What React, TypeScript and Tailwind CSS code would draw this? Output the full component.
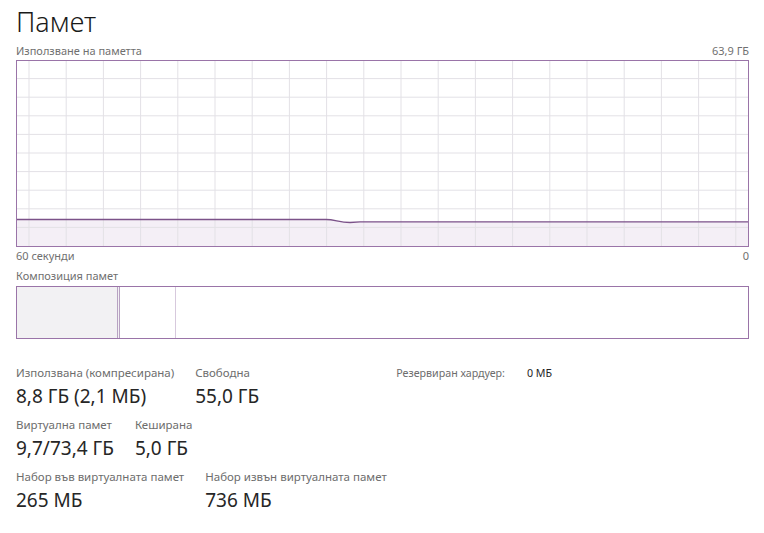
import type { ReactNode } from 'react'

const FONT = { fontFamily: '"Noto Sans", "Open Sans", sans-serif' }

const W = 731
const H = 185
const COLS = Array.from({ length: 20 }, (_, i) => 12 + i * 37.2).filter((x) => x < W)
const ROWS = Array.from({ length: 9 }, (_, i) => 17.6 + i * 18.6)

const usage = `M0 158.5 L309 158.5 C318 158.5 322 161.5 333 161.5 L343 160.8 L${W} 160.8`

function UsageChart() {
  return (
    <div className="h-[187px] w-[733px] border border-[#9a74a8]">
      <svg width={W} height={H} className="block">
        <path d={`${usage} L${W} ${H} L0 ${H} Z`} fill="#f4eff6" />
        {COLS.map((x) => (
          <line key={x} x1={x} x2={x} y1={0} y2={H} stroke="#e3e1e6" strokeWidth={1} />
        ))}
        {ROWS.map((y) => (
          <line key={y} x1={0} x2={W} y1={y} y2={y} stroke="#e3e1e6" strokeWidth={1} />
        ))}
        <path d={usage} fill="none" stroke="#7b5289" strokeWidth={1.3} />
      </svg>
    </div>
  )
}

function Stat({ label, value }: { label: string; value: ReactNode }) {
  return (
    <div className="flex flex-col">
      <span className="text-[11.5px] leading-[16px] text-[#6d6d6d]">{label}</span>
      <span className="mt-[3px] text-[19px] leading-[24px] text-[#262626]">{value}</span>
    </div>
  )
}

export default function App() {
  return (
    <div className="h-[533px] w-[764px] bg-white px-[16px]" style={FONT}>
      <h1 className="pt-[5px] text-[27px] font-light leading-[34px] text-[#1a1a1a]">Памет</h1>

      <div className="mt-[5px] flex w-[733px] justify-between text-[11px] leading-[14px] text-[#707070]">
        <span>Използване на паметта</span>
        <span>63,9 ГБ</span>
      </div>
      <div className="mt-[2px]">
        <UsageChart />
      </div>
      <div className="mt-[2px] flex w-[733px] justify-between text-[11px] leading-[14px] text-[#707070]">
        <span>60 секунди</span>
        <span>0</span>
      </div>

      <div className="mt-[6px] text-[11px] leading-[14px] text-[#707070]">Композиция памет</div>
      <div className="mt-[3px] flex h-[53px] w-[733px] border border-[#9a74a8]">
        <div className="w-[103px] border-r-[3px] border-double border-[#b8a2c2] bg-[#f2f1f3]" />
        <div className="w-[56px] border-r border-[#d7c9dd]" />
        <div className="flex-1" />
      </div>

      <div className="mt-[26px] flex gap-[21px]">
        <Stat label="Използвана (компресирана)" value="8,8 ГБ (2,1 МБ)" />
        <Stat label="Свободна" value="55,0 ГБ" />
        <div className="ml-[116px] flex gap-[22px] text-[10.7px] leading-[16px]">
          <span className="text-[#6d6d6d]">Резервиран хардуер:</span>
          <span className="text-[#262626]">0 МБ</span>
        </div>
      </div>
      <div className="mt-[9px] flex gap-[21px]">
        <Stat label="Виртуална памет" value="9,7/73,4 ГБ" />
        <Stat label="Кеширана" value="5,0 ГБ" />
      </div>
      <div className="mt-[9px] flex gap-[21px]">
        <Stat label="Набор във виртуалната памет" value="265 МБ" />
        <Stat label="Набор извън виртуалната памет" value="736 МБ" />
      </div>
    </div>
  )
}
